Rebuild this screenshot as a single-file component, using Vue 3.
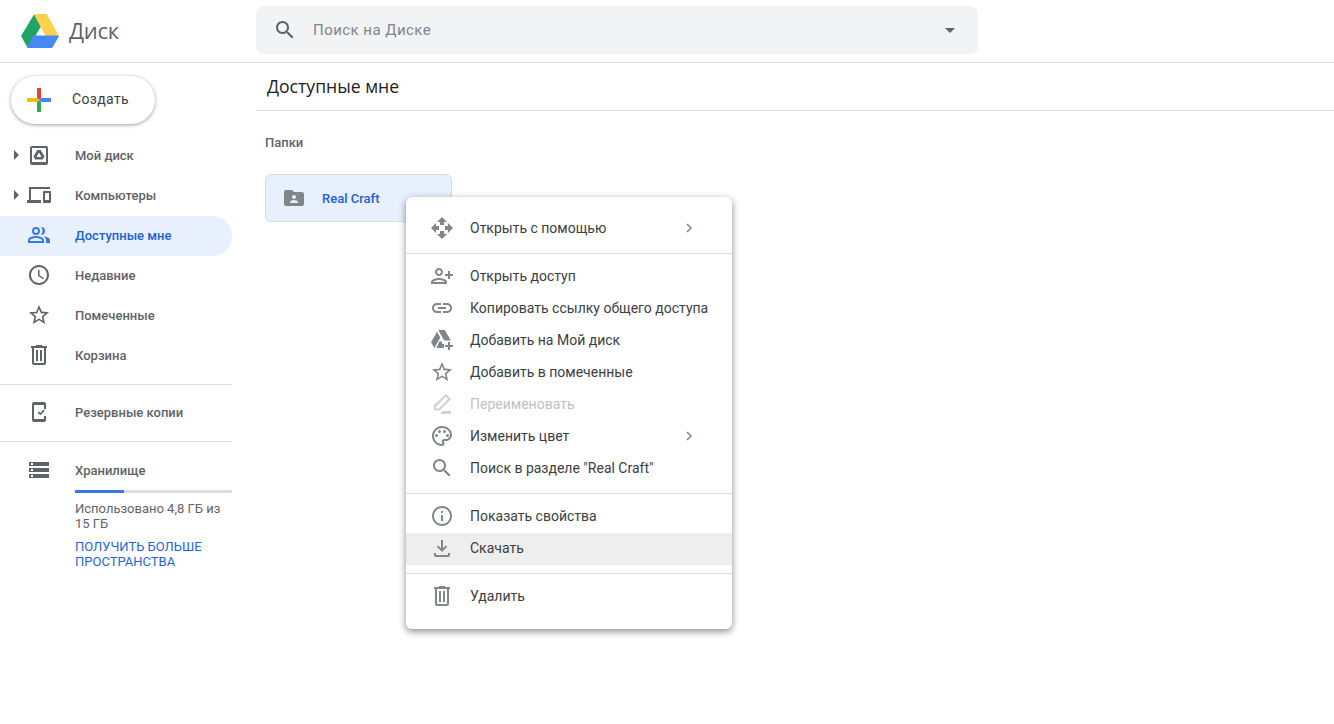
<script setup>
const icons = {
  drive: 'M5 3h14a2 2 0 0 1 2 2v15a2 2 0 0 1-2 2H5a2 2 0 0 1-2-2V5a2 2 0 0 1 2-2zm0 2v14h14V5H5zM10.300 7h3.400l3.800 6.500-1.700 3H8.200l-1.700-3zM12 9.500 9.500 14h5z',
  devices: 'M4 6h19V4H2v13H0v3h14v-3H4V6zm19 2h-6c-.55 0-1 .45-1 1v10c0 .55.45 1 1 1h6c.55 0 1-.45 1-1V9c0-.55-.45-1-1-1zm-1 9h-4v-7h4v7z',
  people: 'M9 4a4 4 0 1 1 0 8 4 4 0 0 1 0-8zm0 2a2 2 0 1 0 0 4 2 2 0 0 0 0-4zM14 4a4 4 0 1 1 0 8 6 6 0 0 0 0-8zM9 13c2.700 0 8 1.300 8 4v3H1v-3c0-2.700 5.300-4 8-4zm0 2c-2.600 0-5.700 1.200-6 2v1h12v-1c-.3-.8-3.400-2-6-2zM16.500 13.200c2.800.4 6.500 1.600 6.500 3.800v3h-4v-3c0-1.600-1-2.900-2.500-3.800z',
  clock: 'M11.99 2C6.47 2 2 6.48 2 12s4.47 10 9.99 10C17.52 22 22 17.52 22 12S17.52 2 11.99 2zM12 20c-4.42 0-8-3.58-8-8s3.58-8 8-8 8 3.58 8 8-3.58 8-8 8zm.5-13H11v6l5.25 3.15.75-1.23-4.5-2.67z',
  star: 'M22 9.24l-7.19-.62L12 2 9.19 8.63 2 9.24l5.46 4.73L5.82 21 12 17.27 18.18 21l-1.63-7.03L22 9.24zM12 15.4l-3.76 2.27 1-4.28-3.32-2.88 4.38-.38L12 6.1l1.71 4.04 4.38.38-3.32 2.88 1 4.28L12 15.4z',
  trash: 'M15 3V2H9v1H4v2h1v15c0 1.1.9 2 2 2h10c1.1 0 2-.9 2-2V5h1V3h-5zm2 17H7V5h10v15zM9 7h2v11H9zm4 0h2v11h-2z',
  backup: 'M7 2h10a2 2 0 0 1 2 2v5h-2V5H7v14h10v-3h2v4a2 2 0 0 1-2 2H7a2 2 0 0 1-2-2V4a2 2 0 0 1 2-2zm9.600 7.600 1.100 1.100-4.400 4.600-2.600-2.600 1.100-1.100 1.500 1.500 3.300-3.500z',
  storage: 'M2 20h20v-4H2v4zm2-3h2v2H4v-2zM2 4v4h20V4H2zm4 3H4V5h2v2zm-4 7h20v-4H2v4zm2-3h2v2H4v-2z',
  openWith: 'M10 9h4V6h3l-5-5-5 5h3v3zm-1 1H6V7l-5 5 5 5v-3h3v-4zm14 2l-5-5v3h-3v4h3v3l5-5zm-9 3h-4v3H7l5 5 5-5h-3v-3z',
  personAdd: 'M9 12c2.21 0 4-1.79 4-4s-1.79-4-4-4-4 1.79-4 4 1.79 4 4 4zm0-6c1.1 0 2 .9 2 2s-.9 2-2 2-2-.9-2-2 .9-2 2-2zM9 14c-2.67 0-8 1.34-8 4v2h16v-2c0-2.66-5.33-4-8-4zm-6 4c.22-.72 3.31-2 6-2 2.7 0 5.8 1.29 6 2H3zM20 15v-3h3v-2h-3V7h-2v3h-3v2h3v3h2z',
  link: 'M3.9 12c0-1.71 1.39-3.1 3.1-3.1h4V7H7c-2.76 0-5 2.24-5 5s2.24 5 5 5h4v-1.9H7c-1.71 0-3.1-1.39-3.1-3.1zM8 13h8v-2H8v2zm9-6h-4v1.9h4c1.71 0 3.1 1.39 3.1 3.1s-1.39 3.1-3.1 3.1h-4V17h4c2.76 0 5-2.24 5-5s-2.24-5-5-5z',
  driveAdd: 'M8.200 2h6.600l6 10.400h-6.600L8.200 2zM7 3.800l3.300 5.800L4.400 20 1 14.200 7 3.800zM12 13.500v2.500h2v4H6.300l3-6.500H12zM18 14h2v3h3v2h-3v3h-2v-3h-3v-2h3v-3z',
  rename: 'M16 2l5 5L9.500 18.500H4V13zm0 2.800-10 10v1.700h2.700L18.200 7zM13 19h8v3H10z',
  palette: 'M12 22C6.49 22 2 17.51 2 12S6.49 2 12 2s10 4.04 10 9c0 3.31-2.69 6-6 6h-1.77c-.28 0-.5.22-.5.5 0 .12.05.23.13.33.41.47.64 1.06.64 1.67 0 1.38-1.12 2.5-2.5 2.5zm0-18c-4.41 0-8 3.59-8 8s3.59 8 8 8c.28 0 .5-.22.5-.5 0-.16-.08-.28-.14-.35-.41-.46-.63-1.05-.63-1.65 0-1.38 1.12-2.5 2.500-2.500H16c2.21 0 4-1.79 4-4 0-3.86-3.59-7-8-7zM6.500 10a1.500 1.500 0 1 1 0 3 1.500 1.500 0 0 1 0-3zm3-4a1.500 1.500 0 1 1 0 3 1.500 1.500 0 0 1 0-3zm5 0a1.500 1.500 0 1 1 0 3 1.500 1.500 0 0 1 0-3zm3 4a1.500 1.500 0 1 1 0 3 1.500 1.500 0 0 1 0-3z',
  search: 'M15.5 14h-.79l-.28-.27C15.41 12.59 16 11.11 16 9.5 16 5.91 13.09 3 9.5 3S3 5.91 3 9.5 5.91 16 9.5 16c1.61 0 3.09-.59 4.23-1.57l.27.28v.79l5 4.99L20.49 19l-4.99-5zm-6 0C7.01 14 5 11.99 5 9.5S7.01 5 9.5 5 14 7.01 14 9.5 11.99 14 9.5 14z',
  info: 'M11 7h2v2h-2zm0 4h2v6h-2zm1-9C6.48 2 2 6.48 2 12s4.48 10 10 10 10-4.48 10-10S17.52 2 12 2zm0 18c-4.41 0-8-3.59-8-8s3.59-8 8-8 8 3.59 8 8-3.59 8-8 8z',
  download: 'M11 4h2v8.200l2.800-2.800 1.400 1.400L12 16l-5.200-5.200 1.400-1.400 2.800 2.800V4zM4 17h2v2h12v-2h2v2a2 2 0 0 1-2 2H6a2 2 0 0 1-2-2v-2z',
  chevron: 'M10 6L8.59 7.41 13.17 12l-4.58 4.59L10 18l6-6z',
  folder: 'M20 6h-8l-2-2H4c-1.1 0-2 .9-2 2v12c0 1.1.9 2 2 2h16c1.1 0 2-.9 2-2V8c0-1.1-.9-2-2-2zm-8 3c1.1 0 2 .9 2 2s-.9 2-2 2-2-.9-2-2 .9-2 2-2zm4 8H8v-1c0-1.33 2.67-2 4-2s4 .67 4 2v1z'
}

const navTop = [
  { label: 'Мой диск', icon: 'drive', caret: true },
  { label: 'Компьютеры', icon: 'devices', caret: true },
  { label: 'Доступные мне', icon: 'people', active: true },
  { label: 'Недавние', icon: 'clock' },
  { label: 'Помеченные', icon: 'star' },
  { label: 'Корзина', icon: 'trash' }
]

const menuGroups = [
  [{ label: 'Открыть с помощью', icon: 'openWith', sub: true }],
  [
    { label: 'Открыть доступ', icon: 'personAdd' },
    { label: 'Копировать ссылку общего доступа', icon: 'link' },
    { label: 'Добавить на Мой диск', icon: 'driveAdd' },
    { label: 'Добавить в помеченные', icon: 'star' },
    { label: 'Переименовать', icon: 'rename', disabled: true },
    { label: 'Изменить цвет', icon: 'palette', sub: true },
    { label: 'Поиск в разделе "Real Craft"', icon: 'search' }
  ],
  [
    { label: 'Показать свойства', icon: 'info' },
    { label: 'Скачать', icon: 'download', hover: true }
  ],
  [{ label: 'Удалить', icon: 'trash' }]
]
</script>

<template>
  <div class="app">
    <header class="topbar">
      <div class="brand">
        <svg class="logo" width="38" height="34" viewBox="21 13 38 34">
          <path d="M34.500 13.500 21.500 35l6.500 11.500L41 24.500z" fill="#1fa463" stroke="#1fa463" stroke-linejoin="round" />
          <path d="M34.500 13.500h12L58.500 35H46z" fill="#ffd04b" stroke="#ffd04b" stroke-linejoin="round" />
          <path d="M33 35h25.500L52 46.500H28z" fill="#4688f4" stroke="#4688f4" stroke-linejoin="round" />
        </svg>
        <span class="brand-name">Диск</span>
      </div>
      <div class="search">
        <svg class="search-icon" width="24" height="24" viewBox="0 0 24 24"><path :d="icons.search" /></svg>
        <span class="search-text">Поиск на Диске</span>
        <span class="search-caret"></span>
      </div>
    </header>

    <div class="body">
      <aside class="sidebar">
        <button type="button" class="create">
          <svg width="24" height="24" viewBox="0 0 24 24">
            <path d="M10 0h4v10l-2 2-2-2z" fill="#ea4335" />
            <path d="M24 10v4H14l-2-2 2-2z" fill="#4285f4" />
            <path d="M14 24h-4V14l2-2 2 2z" fill="#34a853" />
            <path d="M0 14v-4h10l2 2-2 2z" fill="#fbbc05" />
          </svg>
          <span>Создать</span>
        </button>

        <nav class="nav">
          <div v-for="item in navTop" :key="item.label" class="nav-item" :class="{ active: item.active }">
            <span v-if="item.caret" class="caret"></span>
            <svg class="nav-icon" width="24" height="24" viewBox="0 0 24 24"><path :d="icons[item.icon]" /></svg>
            <span>{{ item.label }}</span>
          </div>
        </nav>
        <div class="side-divider first"></div>
        <div class="nav-item">
          <svg class="nav-icon" width="24" height="24" viewBox="0 0 24 24"><path :d="icons.backup" /></svg>
          <span>Резервные копии</span>
        </div>
        <div class="side-divider second"></div>

        <div class="storage">
          <div class="nav-item">
            <svg class="nav-icon" width="24" height="24" viewBox="0 0 24 24"><path :d="icons.storage" /></svg>
            <span>Хранилище</span>
          </div>
          <div class="storage-info">
            <div class="bar"><div class="bar-fill"></div></div>
            <p class="used">Использовано 4,8 ГБ из 15 ГБ</p>
            <a class="more">ПОЛУЧИТЬ БОЛЬШЕ ПРОСТРАНСТВА</a>
          </div>
        </div>
      </aside>

      <main class="main">
        <h1 class="title">Доступные мне</h1>
        <div class="content">
          <div class="section-label">Папки</div>
          <div class="folder">
            <svg width="24" height="24" viewBox="0 0 24 24"><path :d="icons.folder" /></svg>
            <span>Real Craft</span>
          </div>
        </div>
      </main>
    </div>

    <div class="menu">
      <template v-for="(group, i) in menuGroups" :key="i">
        <div v-if="i" class="menu-divider"></div>
        <div
          v-for="item in group"
          :key="item.label"
          class="menu-item"
          :class="{ disabled: item.disabled, hover: item.hover }"
        >
          <svg class="menu-icon" width="24" height="24" viewBox="0 0 24 24"><path :d="icons[item.icon]" /></svg>
          <span class="menu-label">{{ item.label }}</span>
          <svg v-if="item.sub" class="menu-chevron" width="18" height="18" viewBox="0 0 24 24"><path :d="icons.chevron" /></svg>
        </div>
      </template>
    </div>
  </div>
</template>

<style scoped>
.app {
  position: relative;
  height: 724px;
  overflow: hidden;
  background: #fff;
  font-family: Roboto, "Liberation Sans", sans-serif;
  color: #5f6368;
}

.topbar {
  display: flex;
  align-items: center;
  height: 62px;
  border-bottom: 1px solid #dadce0;
}

.brand {
  display: flex;
  align-items: center;
  gap: 10px;
  width: 256px;
  padding-left: 21px;
  box-sizing: border-box;
  flex-shrink: 0;
}

.brand-name {
  margin-top: -3px;
  font-size: 22px;
  color: #5f6368;
  font-family: "Open Sans", Roboto, sans-serif;
  letter-spacing: -0.3px;
}

.search {
  display: flex;
  align-items: center;
  width: 722px;
  height: 48px;
  margin-top: -2px;
  background: #f1f3f4;
  border-radius: 8px;
}

.search-icon {
  margin-left: 17px;
  fill: #5f6368;
}

.search-text {
  margin-left: 16px;
  flex: 1;
  font-size: 15px;
  color: #80868b;
  letter-spacing: 0.45px;
}

.search-caret {
  width: 0;
  height: 0;
  margin-right: 23px;
  border-left: 5px solid transparent;
  border-right: 5px solid transparent;
  border-top: 5px solid #5f6368;
}

.body {
  display: flex;
}

.sidebar {
  width: 232px;
  margin-right: 24px;
  flex-shrink: 0;
}

.create {
  display: flex;
  align-items: center;
  gap: 21px;
  width: 144px;
  height: 48px;
  margin: 13px 0 0 11px;
  padding: 0 0 2px 16px;
  border: none;
  border-radius: 24px;
  background: #fff;
  box-shadow: 0 1px 3px rgba(60, 64, 67, 0.35), 0 1px 4px 1px rgba(60, 64, 67, 0.15);
  font-family: inherit;
  font-size: 14px;
  font-weight: 400;
  letter-spacing: 0.35px;
  color: #3c4043;
}

.create svg {
  margin-top: 2px;
}

.nav {
  margin-top: 12px;
}

.nav-item {
  position: relative;
  display: flex;
  align-items: center;
  height: 40px;
  padding-left: 27px;
  font-size: 13px;
  font-weight: 500;
  color: #5f6368;
}

.nav .nav-item {
  box-sizing: border-box;
  padding-bottom: 2px;
}

.nav-icon {
  margin-right: 24px;
  fill: #5f6368;
  flex-shrink: 0;
}

.nav-item.active {
  background: #e8f0fe;
  border-radius: 0 20px 20px 0;
  color: #1a62d6;
}

.nav-item.active .nav-icon {
  fill: #3b78e7;
}

.caret {
  position: absolute;
  left: 14px;
  top: 14px;
  width: 0;
  height: 0;
  border-top: 5px solid transparent;
  border-bottom: 5px solid transparent;
  border-left: 5px solid #5f6368;
}

.side-divider {
  height: 1px;
  background: #dadce0;
}

.side-divider.first {
  margin: 8px 0 7px;
}

.side-divider.second {
  margin: 9px 0 8px;
}

.storage-info {
  padding: 0 0 0 75px;
}

.bar {
  height: 3px;
  background: #dadce0;
}

.bar-fill {
  width: 49px;
  height: 100%;
  background: #3b78e7;
}

.used {
  margin: 8px 10px 8px 0;
  font-size: 13px;
  line-height: 15px;
  color: #5f6368;
}

.more {
  display: block;
  margin-top: 8px;
  font-size: 13px;
  font-weight: 400;
  line-height: 15px;
  color: #1f65de;
}

.main {
  flex: 1;
}

.title {
  margin: 0;
  height: 47px;
  padding-left: 11px;
  border-bottom: 1px solid #dadce0;
  font-family: "Open Sans", Roboto, sans-serif;
  font-size: 17.6px;
  font-weight: 400;
  line-height: 47px;
  color: #202124;
}

.content {
  padding: 24px 0 0 9px;
}

.section-label {
  font-size: 13px;
  font-weight: 500;
  line-height: 16px;
  color: #5f6368;
}

.folder {
  display: flex;
  align-items: center;
  gap: 16px;
  width: 187px;
  height: 48px;
  margin-top: 23px;
  padding-left: 16px;
  box-sizing: border-box;
  background: #e8f0fe;
  border: 1px solid #dadce0;
  border-radius: 6px;
  font-size: 13px;
  font-weight: 500;
  color: #1a62d6;
}

.folder svg {
  fill: #80868b;
}

.menu {
  position: absolute;
  left: 406px;
  top: 197px;
  width: 326px;
  padding: 15px 0 17px;
  box-sizing: border-box;
  background: #fff;
  border-radius: 6px;
  box-shadow: 0 2px 10px rgba(0, 0, 0, 0.2), 0 3px 6px rgba(0, 0, 0, 0.28);
}

.menu-divider {
  height: 1px;
  margin: 9px 0 6px;
  background: #dadce0;
}

.menu-item {
  display: flex;
  align-items: center;
  height: 32px;
  padding-left: 24px;
  font-size: 14px;
  color: #3c4043;
}

.menu-item.hover {
  box-sizing: border-box;
  margin: 1px 0 -1px;
  padding-bottom: 2px;
  background: #eee;
}

.menu-item.disabled {
  color: #bdc1c6;
}

.menu-icon {
  margin-right: 16px;
  fill: #80868b;
  flex-shrink: 0;
}

.menu-item.disabled .menu-icon {
  fill: #cfd1d4;
}

.menu-label {
  flex: 1;
}

.menu-chevron {
  margin-right: 34px;
  fill: #80868b;
}
</style>
